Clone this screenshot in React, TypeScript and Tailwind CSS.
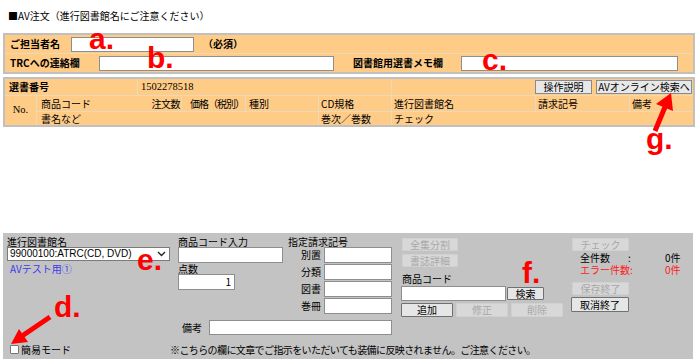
import React from "react";

const inputCls = "bg-white border border-[#8e8e8e]";
const enBtn =
  "flex items-center justify-center bg-[#e6e6e6] border border-[#707070] rounded-[1px] text-black leading-none";
const disBtn =
  "flex items-center justify-center bg-[#d8d8d8] border border-[#d0d0d0] rounded-[1px] text-[#a8a8a8] leading-none";
const cell = "bg-[#ffcc88] flex items-center px-[3px] leading-none";

function Annot({ text, className }: { text: string; className: string }) {
  return (
    <span
      className={
        "absolute font-['Liberation_Sans',Arial,sans-serif] font-bold text-[30px] leading-[30px] text-[#ff0000] " +
        className
      }
    >
      {text}
    </span>
  );
}

export default function App() {
  return (
    <div className="relative w-[700px] h-[363px] bg-white overflow-hidden font-['Noto_Sans_CJK_JP','Noto_Sans',sans-serif] text-[10px] text-black">
      {/* title */}
      <div className="h-[33px] pl-[8px] pt-[10px] leading-[11px]">■AV注文（進行図書館名にご注意ください）</div>

      {/* panel 1 */}
      <div className="ml-[3px] w-[692px] border-2 border-[#c0c0c0] bg-[#ffcc88]">
        <div className="flex items-center h-[18px]">
          <div className="w-[66px] pl-[5px] font-bold leading-none">ご担当者名</div>
          <div className={"w-[123px] h-[15px] " + inputCls} />
          <div className="ml-[9px] font-bold leading-none">（必須）</div>
        </div>
        <div className="h-px bg-[#ecd9b8]" />
        <div className="flex items-center h-[18px]">
          <div className="w-[94px] pl-[5px] font-bold leading-none">TRCへの連絡欄</div>
          <div className={"w-[235px] h-[15px] " + inputCls} />
          <div className="w-[127px] pl-[19px] font-bold leading-none">図書館用選書メモ欄</div>
          <div className={"w-[217px] h-[15px] " + inputCls} />
        </div>
      </div>

      {/* panel 2 */}
      <div className="mt-[3px] ml-[3px] w-[692px] border-2 border-[#c0c0c0] bg-[#ecd9b8]">
        <div className="grid grid-cols-[31px_100px_43px_63px_72px_72px_143px_93px_63px] grid-rows-[16px_15px_13px] gap-px">
          <div className={cell + " col-span-2 font-bold pl-[4px]"}>選書番号</div>
          <div className={cell + " col-span-4 font-['Liberation_Serif',serif] text-[10.5px]"}>1502278518</div>
          <div className={cell + " col-span-3 justify-end gap-[4px] pr-[1px]"}>
            <div className="flex items-center justify-center w-[57px] h-[14px] bg-[#e8e8e8] border border-[#8a8a8a] leading-none">
              操作説明
            </div>
            <div className="flex items-center justify-center w-[96px] h-[14px] bg-[#e8e8e8] border border-[#8a8a8a] leading-none">
              AVオンライン検索へ
            </div>
          </div>

          <div className={cell + " row-span-2 justify-center font-['Liberation_Serif',serif] text-[10.5px]"}>No.</div>
          <div className={cell + " col-span-2 justify-between pl-[4px] pr-[1px]"}>
            <span>商品コード</span>
            <span className="tracking-[-0.5px]">注文数</span>
          </div>
          <div className={cell + " justify-end pr-[1px] tracking-[-1px]"}>価格（税別）</div>
          <div className={cell}>種別</div>
          <div className={cell + " pl-[2px]"}>CD規格</div>
          <div className={cell + " pl-[2px]"}>進行図書館名</div>
          <div className={cell + " pl-[2px]"}>請求記号</div>
          <div className={cell + " pl-[2px]"}>備考</div>

          <div className={cell + " col-span-4 pl-[4px]"}>書名など</div>
          <div className={cell + " pl-[2px]"}>巻次／巻数</div>
          <div className={cell + " col-span-3 pl-[2px]"}>チェック</div>
        </div>
      </div>

      {/* bottom panel */}
      <div className="mt-[106px] ml-[3px] w-[690px] h-[126px] bg-[#c3c3c3] flex flex-col">
        <div className="h-[84px] pt-[3px] flex items-start">
          {/* col A */}
          <div className="ml-[4px] w-[163px] flex flex-col">
            <div className="leading-[11px]">進行図書館名</div>
            <div className="h-[14px] bg-white border border-[#7a7a7a] flex items-center justify-between pl-[2px] pr-[3px]">
              <span className="font-['Liberation_Sans',Arial,sans-serif] text-[10px] leading-none">
                99000100:ATRC(CD, DVD)
              </span>
              <svg width="9" height="6" viewBox="0 0 9 6">
                <path d="M1 1 L4.5 4.5 L8 1" fill="none" stroke="#222" strokeWidth="1.4" />
              </svg>
            </div>
            <div className="mt-[2px] ml-[3px] leading-[11px] text-[#3a3af0]">AVテスト用①</div>
          </div>

          {/* col B */}
          <div className="ml-[8px] w-[105px] flex flex-col">
            <div className="leading-[11px]">商品コード入力</div>
            <div className={"h-[16px] w-[105px] " + inputCls} />
            <div className="leading-[10px] mt-[1px]">点数</div>
            <div className={"h-[16px] w-[57px] flex items-center justify-end pr-[3px] leading-none " + inputCls}>1</div>
          </div>

          {/* col C */}
          <div className="ml-[5px] w-[104px] flex flex-col">
            <div className="leading-[11px]">指定請求記号</div>
            <div className="flex flex-col gap-px">
              {["別置", "分類", "図書", "巻冊"].map((l) => (
                <div key={l} className="flex items-center h-[16px]">
                  <div className="w-[34px] text-right leading-none">{l}</div>
                  <div className={"ml-[3px] w-[70px] h-[16px] " + inputCls} />
                </div>
              ))}
            </div>
          </div>

          {/* col D */}
          <div className="ml-[9px] w-[162px] flex flex-col pt-[2px]">
            <div className={disBtn + " ml-[1px] w-[56px] h-[13px]"}>全集分割</div>
            <div className={disBtn + " ml-[1px] mt-[3px] w-[56px] h-[13px]"}>書誌詳細</div>
            <div className="mt-[6px] ml-[1px] leading-[11px]">商品コード</div>
            <div className="mt-[2px] flex items-center">
              <div className={"w-[105px] h-[15px] " + inputCls} />
              <div className={enBtn + " ml-px w-[37px] h-[13px]"}>検索</div>
            </div>
            <div className="mt-[2px] flex gap-[3px]">
              <div className={enBtn + " w-[52px] h-[14px]"}>追加</div>
              <div className={disBtn + " w-[52px] h-[14px]"}>修正</div>
              <div className={disBtn + " w-[52px] h-[14px]"}>削除</div>
            </div>
          </div>

          {/* col E */}
          <div className="ml-[8px] w-[118px] flex flex-col pt-[2px]">
            <div className={disBtn + " ml-[1px] w-[57px] h-[13px]"}>チェック</div>
            <div className="mt-[1px] flex items-center h-[12px] leading-none">
              <span className="ml-[9px] w-[48px]">全件数</span>
              <span className="w-[37px]">:</span>
              <span>0件</span>
            </div>
            <div className="flex items-center h-[12px] leading-none text-[#ff1a1a]">
              <span className="ml-[9px] w-[85px]">エラー件数:</span>
              <span>0件</span>
            </div>
            <div className={disBtn + " mt-[6px] ml-[1px] w-[57px] h-[13px]"}>保存終了</div>
            <div className={enBtn + " mt-[2px] w-[58px] h-[15px]"}>取消終了</div>
          </div>
        </div>

        {/* 備考 row */}
        <div className="mt-[3px] h-[15px] flex items-center">
          <div className="ml-[179px] w-[27px] leading-none">備考</div>
          <div className={"w-[183px] h-[15px] " + inputCls} />
        </div>

        {/* note row */}
        <div className="mt-[9px] h-[11px] flex items-center">
          <div className="w-[167px] flex items-center">
            <div className="ml-[7px] w-[9px] h-[9px] bg-white border border-[#767676] rounded-[1px]" />
            <span className="ml-[2px] leading-none">簡易モード</span>
          </div>
          <span className="leading-none tracking-[-0.6px]">
            ※こちらの欄に文章でご指示をいただいても装備に反映されません。ご注意ください。
          </span>
        </div>
      </div>

      {/* annotations */}
      <Annot text="a." className="left-[89px] top-[24px]" />
      <Annot text="b." className="left-[147px] top-[43px]" />
      <Annot text="c." className="left-[482px] top-[45px]" />
      <Annot text="g." className="left-[646px] top-[124px]" />
      <Annot text="e." className="left-[137px] top-[245px]" />
      <Annot text="d." className="left-[54px] top-[292px]" />
      <Annot text="f." className="left-[522px] top-[258px]" />

      <svg className="absolute left-0 top-0 pointer-events-none" width="700" height="363">
        <line x1="655" y1="131" x2="665" y2="107" stroke="#ff0000" strokeWidth="5" />
        <polygon points="671,93 673,111 656,104" fill="#ff0000" />
        <line x1="50" y1="317" x2="22" y2="336" stroke="#ff0000" strokeWidth="5" />
        <polygon points="11,344 28,342 19,329" fill="#ff0000" />
      </svg>
    </div>
  );
}
